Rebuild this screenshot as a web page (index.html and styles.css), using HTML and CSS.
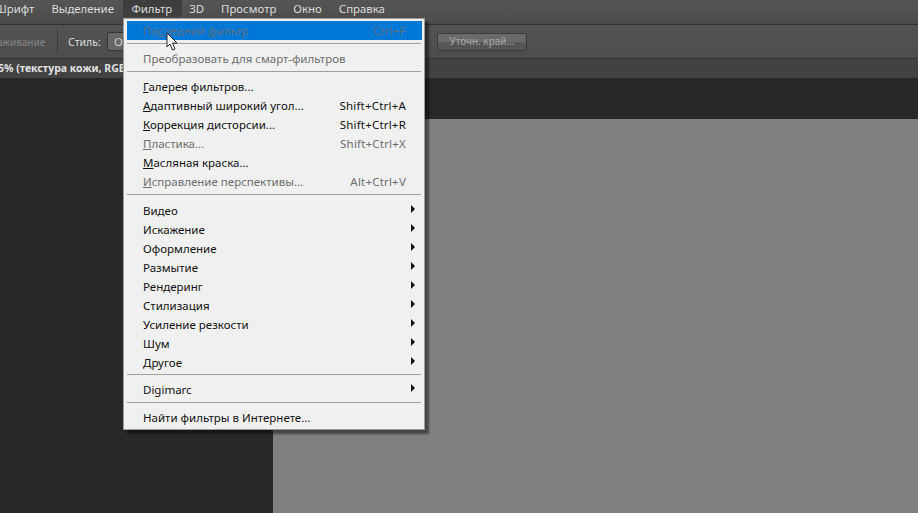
FILE: index.html
```html
<!DOCTYPE html>
<html lang="ru">
<head>
<meta charset="utf-8">
<title>Фильтр</title>
<link rel="stylesheet" href="styles.css">
</head>
<body>
<div class="app">
  <nav class="menubar">
    <span class="mi m-font">Шрифт</span>
    <span class="mi">Выделение</span>
    <span class="mi active">Фильтр</span>
    <span class="mi">3D</span>
    <span class="mi">Просмотр</span>
    <span class="mi">Окно</span>
    <span class="mi">Справка</span>
  </nav>
  <div class="options">
    <span class="opt-dim">аживание</span>
    <span class="vsep"></span>
    <span class="opt-label">Стиль:</span>
    <span class="select">Об</span>
    <span class="refine">Уточн. край...</span>
  </div>
  <div class="tabs"><span class="tab">5% (текстура кожи, RGB/8) *</span></div>
  <main class="workspace"><div class="canvas"></div></main>
</div>
<div class="menu">
  <div class="row first disabled"><span>По<u>с</u>ледний <u>ф</u>ильтр</span><span class="key">Ctrl+F</span></div>
  <div class="sep"></div>
  <div class="row disabled"><span>Преобразовать для смарт-фильтров</span></div>
  <div class="sep"></div>
  <div class="row"><span><u>Г</u>алерея фильтров...</span></div>
  <div class="row"><span><u>А</u>даптивный широкий угол...</span><span class="key">Shift+Ctrl+A</span></div>
  <div class="row"><span><u>К</u>оррекция дисторсии...</span><span class="key">Shift+Ctrl+R</span></div>
  <div class="row disabled"><span><u>П</u>ластика...</span><span class="key">Shift+Ctrl+X</span></div>
  <div class="row"><span><u>М</u>асляная краска...</span></div>
  <div class="row disabled"><span><u>И</u>справление перспективы...</span><span class="key">Alt+Ctrl+V</span></div>
  <div class="sep wide"></div>
  <div class="row sub"><span>Видео</span></div>
  <div class="row sub"><span>Искажение</span></div>
  <div class="row sub"><span>Оформление</span></div>
  <div class="row sub"><span>Размытие</span></div>
  <div class="row sub"><span>Рендеринг</span></div>
  <div class="row sub"><span>Стилизация</span></div>
  <div class="row sub"><span>Усиление резкости</span></div>
  <div class="row sub"><span>Шум</span></div>
  <div class="row sub"><span>Другое</span></div>
  <div class="sep tight"></div>
  <div class="row sub"><span>Digimarc</span></div>
  <div class="sep"></div>
  <div class="row"><span>Найти фильтры в Интернете...</span></div>
</div>
<svg class="cursor" width="14" height="20" viewBox="0 0 14 20"><path d="M1 1v14l3-3 2.500 6 2.500-1-2.500-6h4.500z" fill="#fff" stroke="#222" stroke-width="1"/></svg>
</body>
</html>
```
FILE: styles.css
```css
* { box-sizing: border-box; }
html, body { margin: 0; height: 100%; overflow: hidden; background: #282828; }
body { font: 11.5px "Noto Sans", "DejaVu Sans", sans-serif; }
.app { display: flex; flex-direction: column; height: 513px; }
.menubar { height: 25px; background: linear-gradient(#555, #4b4b4b); border-bottom: 1px solid #333; display: flex; align-items: flex-start; color: #ddd; font-size: 11.4px; line-height: 17px; }
.mi { padding: 0 8.5px; height: 17px; white-space: nowrap; }
.m-font { margin-left: -13.500px; }
.mi.active { background: #3e3e3e; padding: 0 10px 0 8px; margin: 0 -1.500px 0 1px; }
.options { height: 33px; background: linear-gradient(#535353, #4d4d4d); display: flex; align-items: center; color: #ccc; }
.opt-dim { color: #858585; width: 45px; font-size: 10px; text-indent: -3px; white-space: nowrap; }
.vsep { width: 1px; height: 23px; background: #3a3a3a; margin: 0 10px 0 12px; }
.opt-label { width: 39px; font-size: 10.5px; color: #ddd; }
.select { width: 60px; height: 19px; border: 1px solid #333; background: #666; padding-left: 6px; line-height: 17px; border-radius: 2px; }
.refine { width: 90px; height: 18px; margin-left: 270px; border: 1px solid #3a3a3a; border-radius: 2px; background: linear-gradient(#6a6a6a 50%, #555 55%); color: #aaa; font-size: 10px; text-align: center; line-height: 15px; }
.tabs { height: 20px; background: #424242; border-top: 1px solid #333; color: #e2e2e2; font-weight: 700; font-size: 10.5px; line-height: 19px; white-space: nowrap; overflow: hidden; }
.tab { display: inline-block; margin-left: -2px; }
.workspace { flex: 1; background: #282828; padding: 41px 0 0 273px; }
.canvas { height: 100%; background: #808080; }
.menu { position: absolute; left: 123px; top: 18px; width: 302px; background: #f0f0f0; border: 1px solid #9a9a9a; padding: 2px 2px 2px 3px; box-shadow: 4px 4px 2px rgba(0,0,0,.45); color: #111; }
.row { height: 19px; display: flex; justify-content: space-between; align-items: center; padding: 0 16px; line-height: 19px; position: relative; }
.row.first { background: #0078d7; }
.row.first, .row.first .key { color: #5f6f80; }
.key { letter-spacing: .2px; }
.disabled { color: #6d6d6d; }
.sep { height: 1px; background: #a0a0a0; margin: 3px 1px 5px 0; }
.sep.wide { margin-bottom: 6px; }
.sep.tight { margin-top: 2px; }
.sub::after { content: ""; position: absolute; right: 7px; top: 4px; border-left: 4px solid #111; border-top: 4px solid transparent; border-bottom: 4px solid transparent; }
.cursor { position: absolute; left: 166px; top: 32px; }
```
